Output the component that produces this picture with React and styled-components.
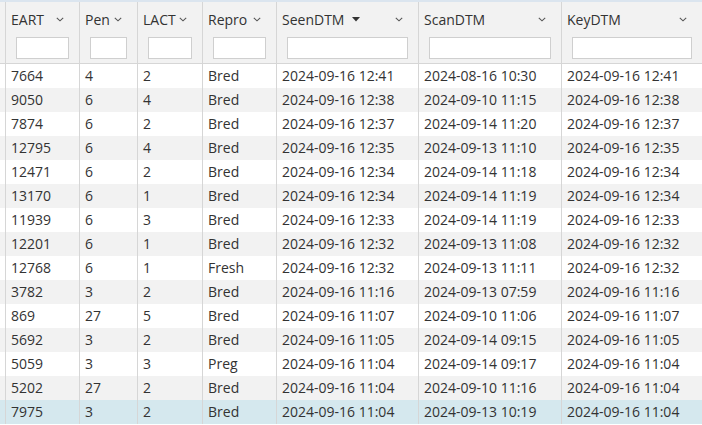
import React from "react";
import styled, { createGlobalStyle } from "styled-components";

const Global = createGlobalStyle`
  html, body { margin: 0; padding: 0; background: #ffffff; }
  body { font-family: "Open Sans", "Noto Sans", sans-serif; color: #333333; }
`;

const COLS = "6px 74px 58px 65px 74px 142px 143px 141px";

const Wrap = styled.div`
  width: 702px;
  height: 425px;
  overflow: hidden;
  border-top: 2px solid #dbe5ef;
  box-sizing: border-box;
  background: #ffffff;
`;

const HeaderRow = styled.div`
  display: grid;
  grid-template-columns: ${COLS};
  height: 61px;
  background: #f2f2f2;
  border-bottom: 1px solid #d6d6d6;
`;

const HeadCell = styled.div`
  border-right: 1px solid #d6d6d6;
  display: flex;
  flex-direction: column;
  padding: 7px 0 0 0;
  box-sizing: border-box;
  min-width: 0;
`;

const HeadTop = styled.div`
  display: flex;
  align-items: center;
  height: 20px;
  padding-left: 5px;
  font-size: 14px;
  color: #333333;
  white-space: nowrap;
`;

const Label = styled.span`
  flex: none;
`;

const Spacer = styled.span`
  flex: 1;
`;

const SortIcon = styled.svg`
  margin-left: 8px;
  flex: none;
`;

const Chevron = styled.svg`
  flex: none;
  margin-right: 15px;
`;

const FilterBox = styled.input`
  margin: 8px 10px 0 10px;
  height: 22px;
  box-sizing: border-box;
  border: 1px solid #cfcfcf;
  background: #ffffff;
  outline: none;
  padding: 0 4px;
  min-width: 0;
  width: calc(100% - 20px);
`;

const Row = styled.div`
  display: grid;
  grid-template-columns: ${COLS};
  height: 24px;
  background: ${(p) => (p.$selected ? "#d5e8ee" : p.$alt ? "#f2f2f2" : "#ffffff")};
`;

const Cell = styled.div`
  border-right: 1px solid #d6d6d6;
  padding-left: 5px;
  font-size: 14px;
  line-height: 24px;
  white-space: nowrap;
  overflow: hidden;
  color: #333333;
`;

const columns = [
  { key: "eart", label: "EART" },
  { key: "pen", label: "Pen" },
  { key: "lact", label: "LACT" },
  { key: "repro", label: "Repro" },
  { key: "seen", label: "SeenDTM", sorted: true },
  { key: "scan", label: "ScanDTM" },
  { key: "key", label: "KeyDTM" },
];

const data = [
  ["7664", "4", "2", "Bred", "2024-09-16 12:41", "2024-08-16 10:30", "2024-09-16 12:41"],
  ["9050", "6", "4", "Bred", "2024-09-16 12:38", "2024-09-10 11:15", "2024-09-16 12:38"],
  ["7874", "6", "2", "Bred", "2024-09-16 12:37", "2024-09-14 11:20", "2024-09-16 12:37"],
  ["12795", "6", "4", "Bred", "2024-09-16 12:35", "2024-09-13 11:10", "2024-09-16 12:35"],
  ["12471", "6", "2", "Bred", "2024-09-16 12:34", "2024-09-14 11:18", "2024-09-16 12:34"],
  ["13170", "6", "1", "Bred", "2024-09-16 12:34", "2024-09-14 11:19", "2024-09-16 12:34"],
  ["11939", "6", "3", "Bred", "2024-09-16 12:33", "2024-09-14 11:19", "2024-09-16 12:33"],
  ["12201", "6", "1", "Bred", "2024-09-16 12:32", "2024-09-13 11:08", "2024-09-16 12:32"],
  ["12768", "6", "1", "Fresh", "2024-09-16 12:32", "2024-09-13 11:11", "2024-09-16 12:32"],
  ["3782", "3", "2", "Bred", "2024-09-16 11:16", "2024-09-13 07:59", "2024-09-16 11:16"],
  ["869", "27", "5", "Bred", "2024-09-16 11:07", "2024-09-10 11:06", "2024-09-16 11:07"],
  ["5692", "3", "2", "Bred", "2024-09-16 11:05", "2024-09-14 09:15", "2024-09-16 11:05"],
  ["5059", "3", "3", "Preg", "2024-09-16 11:04", "2024-09-14 09:17", "2024-09-16 11:04"],
  ["5202", "27", "2", "Bred", "2024-09-16 11:04", "2024-09-10 11:16", "2024-09-16 11:04"],
  ["7975", "3", "2", "Bred", "2024-09-16 11:04", "2024-09-13 10:19", "2024-09-16 11:04"],
];

function ChevronIcon() {
  return (
    <Chevron width="8" height="5" viewBox="0 0 8 5">
      <path d="M0.8 0.8 L4 3.8 L7.2 0.8" fill="none" stroke="#555" strokeWidth="1.1" />
    </Chevron>
  );
}

export default function App() {
  return (
    <>
      <Global />
      <Wrap>
        <HeaderRow>
          <HeadCell />
          {columns.map((c) => (
            <HeadCell key={c.key}>
              <HeadTop>
                <Label>{c.label}</Label>
                {c.sorted && (
                  <SortIcon width="8" height="5" viewBox="0 0 8 5">
                    <path d="M0 0 L8 0 L4 4.5 Z" fill="#333" />
                  </SortIcon>
                )}
                <Spacer />
                <ChevronIcon />
              </HeadTop>
              <FilterBox type="text" aria-label={c.label + " filter"} />
            </HeadCell>
          ))}
        </HeaderRow>
        {data.map((r, i) => (
          <Row key={i} $alt={i % 2 === 1} $selected={i === data.length - 1}>
            <Cell />
            {r.map((v, j) => (
              <Cell key={j}>{v}</Cell>
            ))}
          </Row>
        ))}
      </Wrap>
    </>
  );
}
